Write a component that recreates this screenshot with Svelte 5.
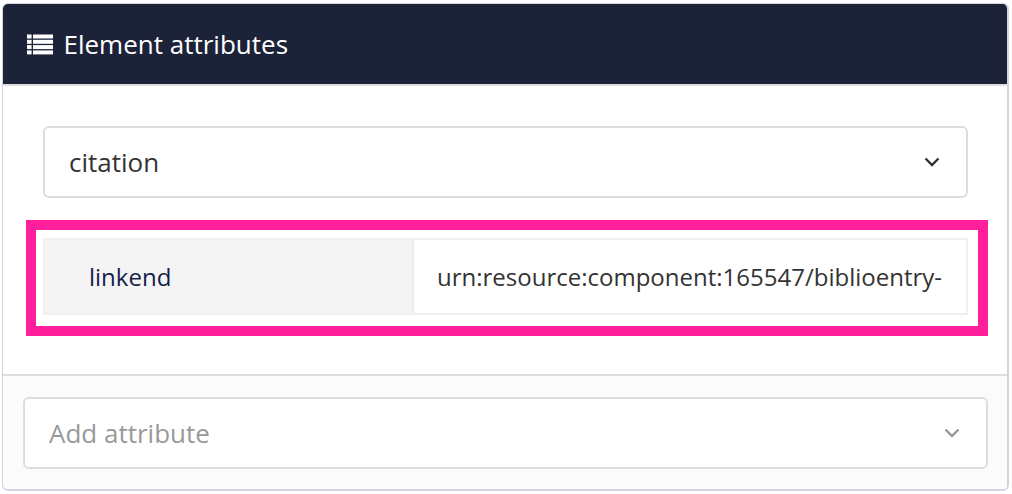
<script>
	let linkend = 'urn:resource:component:165547/biblioentry-';
</script>

<div class="card">
	<header class="card-header">
		<svg class="list-icon" width="26" height="21" viewBox="0 0 26 21" fill="currentColor">
			<rect x="0" y="0.5" width="4.6" height="4" />
			<rect x="6" y="0.5" width="20" height="4" />
			<rect x="0" y="5.8" width="4.6" height="4" />
			<rect x="6" y="5.8" width="20" height="4" />
			<rect x="0" y="11.1" width="4.6" height="4" />
			<rect x="6" y="11.1" width="20" height="4" />
			<rect x="0" y="16.4" width="4.6" height="4" />
			<rect x="6" y="16.4" width="20" height="4" />
		</svg>
		<span>Element attributes</span>
	</header>

	<div class="card-body">
		<div class="select">
			<span>citation</span>
			<svg class="chevron" width="16" height="10" viewBox="0 0 16 10" fill="none" stroke="currentColor" stroke-width="2.4">
				<path d="M1.5 1.5 8 8l6.5-6.5" />
			</svg>
		</div>

		<div class="highlight">
			<div class="attr-row">
				<div class="attr-name">linkend</div>
				<div class="attr-value">{linkend}</div>
			</div>
		</div>
	</div>

	<footer class="card-footer">
		<div class="select placeholder">
			<span>Add attribute</span>
			<svg class="chevron" width="16" height="10" viewBox="0 0 16 10" fill="none" stroke="currentColor" stroke-width="2.4">
				<path d="M1.5 1.5 8 8l6.5-6.5" />
			</svg>
		</div>
	</footer>
</div>

<style>
	:global(body) {
		background: #fff;
		font-family: 'Open Sans', 'Noto Sans', sans-serif;
	}

	.card {
		box-sizing: border-box;
		width: 1007px;
		height: 488px;
		margin: 3px 0 0 2px;
		border: 1px solid #d3d4e2;
		border-bottom-width: 2px;
		border-right-width: 2px;
		border-radius: 6px;
		overflow: hidden;
		display: flex;
		flex-direction: column;
	}

	.card-header {
		box-sizing: border-box;
		height: 82px;
		flex: none;
		display: flex;
		align-items: center;
		gap: 10.5px;
		padding: 0 0 0 24px;
		background: #1c2339;
		border-bottom: 2px solid #dfdfdf;
		color: #fff;
		font-size: 26px;
	}

	.card-body {
		flex: 1;
		background: #fff;
		padding: 40px 39px 0 40px;
	}

	.select {
		box-sizing: border-box;
		height: 72px;
		display: flex;
		align-items: center;
		justify-content: space-between;
		padding: 0 26px 0 24px;
		background: #fff;
		border: 2px solid #dddddd;
		border-radius: 6px;
		color: #333;
		font-size: 26px;
	}

	.highlight {
		box-sizing: border-box;
		margin: 22px -20px 0 -17px;
		padding: 8px 10px 11px 7px;
		height: 116px;
		border: 10px solid #ff1f9b;
	}

	.attr-row {
		box-sizing: border-box;
		height: 77px;
		display: flex;
		border: 2px solid #f0f0f0;
		font-size: 24px;
	}

	.attr-name {
		box-sizing: border-box;
		width: 369px;
		padding-left: 44px;
		display: flex;
		align-items: center;
		background: #f4f4f4;
		color: #141f4b;
		border-right: 2px solid #ececec;
	}

	.attr-value {
		flex: 1;
		display: flex;
		align-items: center;
		padding-left: 23px;
		color: #333;
		white-space: nowrap;
		overflow: hidden;
	}

	.card-footer {
		box-sizing: border-box;
		height: 115px;
		flex: none;
		padding: 21px 19px 0 20px;
		background: #fbfbfb;
		border-top: 2px solid #dedede;
	}

	.placeholder {
		height: 72px;
		color: #999;
		padding-right: 26px;
	}
</style>
